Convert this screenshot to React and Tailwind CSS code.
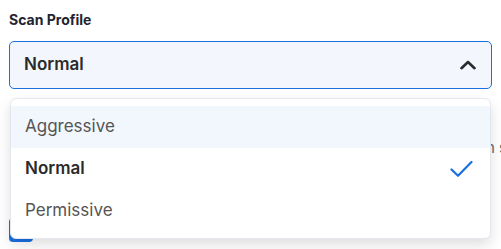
import React from "react";

const options = ["Aggressive", "Normal", "Permissive"];

function ChevronUp() {
  return (
    <svg width="16" height="10" viewBox="0 0 16 10" fill="none" className="text-[#2b2b2b]">
      <path d="M1.5 8.2 L8 2 L14.5 8.2" stroke="currentColor" strokeWidth="2.6" strokeLinecap="round" strokeLinejoin="round" />
    </svg>
  );
}

function Check() {
  return (
    <svg width="23" height="18" viewBox="0 0 23 18" fill="none" className="text-[#1a6fe3]">
      <path d="M1.5 9.5 L8 15.8 L21.5 2" stroke="currentColor" strokeWidth="2.2" strokeLinecap="round" strokeLinejoin="round" />
    </svg>
  );
}

export default function App() {
  const selected = "Normal";
  const hovered = "Aggressive";

  return (
    <div className="w-[501px] h-[249px] overflow-hidden bg-white font-['Inter',sans-serif] relative">
      <div className="px-[9px] pt-[12px]">
        <label className="block text-[14px] leading-[16px] font-bold text-[#1f2430]">Scan Profile</label>

        <div className="relative mt-[13px]">
          <button className="w-full h-[48px] flex items-center justify-between pl-[14px] pr-[15px] bg-[#f3f7fd] border border-[#1a6fe3] rounded-[5px]">
            <span className="text-[17px] font-semibold text-[#2b2b2b]">{selected}</span>
            <ChevronUp />
          </button>

          {/* open list */}
          <div className="absolute z-10 top-full mt-[9px] left-[1px] right-[1px] bg-white border border-[#e3e8ef] rounded-[6px] shadow-[0_6px_14px_rgba(0,0,0,0.13)] pt-[7px] pb-[6px]">
            {options.map((opt) => (
              <div
                key={opt}
                className={
                  "h-[42px] flex items-center justify-between pl-[14px] pr-[17px] " +
                  (opt === hovered ? "bg-[#f2f7fe]" : "")
                }
              >
                <span
                  className={
                    "text-[17px] " +
                    (opt === selected ? "font-semibold text-[#2b2b2b]" : "font-normal text-[#555]")
                  }
                >
                  {opt}
                </span>
                {opt === selected && <Check />}
              </div>
            ))}
          </div>
        </div>

        <div className="mt-[49px] w-[498px] text-right whitespace-nowrap text-[15px] leading-[20px] text-[#666]">
          Defines which rules are applied during each scan s
        </div>

        <div className="mt-[60px] flex items-center gap-3">
          <div className="w-[24px] h-[24px] rounded-[4px] bg-[#1a6fe3]" />
          <span className="text-[14px] leading-[18px] text-[#aaa]">Include subdomains in scan</span>
        </div>
      </div>
    </div>
  );
}
